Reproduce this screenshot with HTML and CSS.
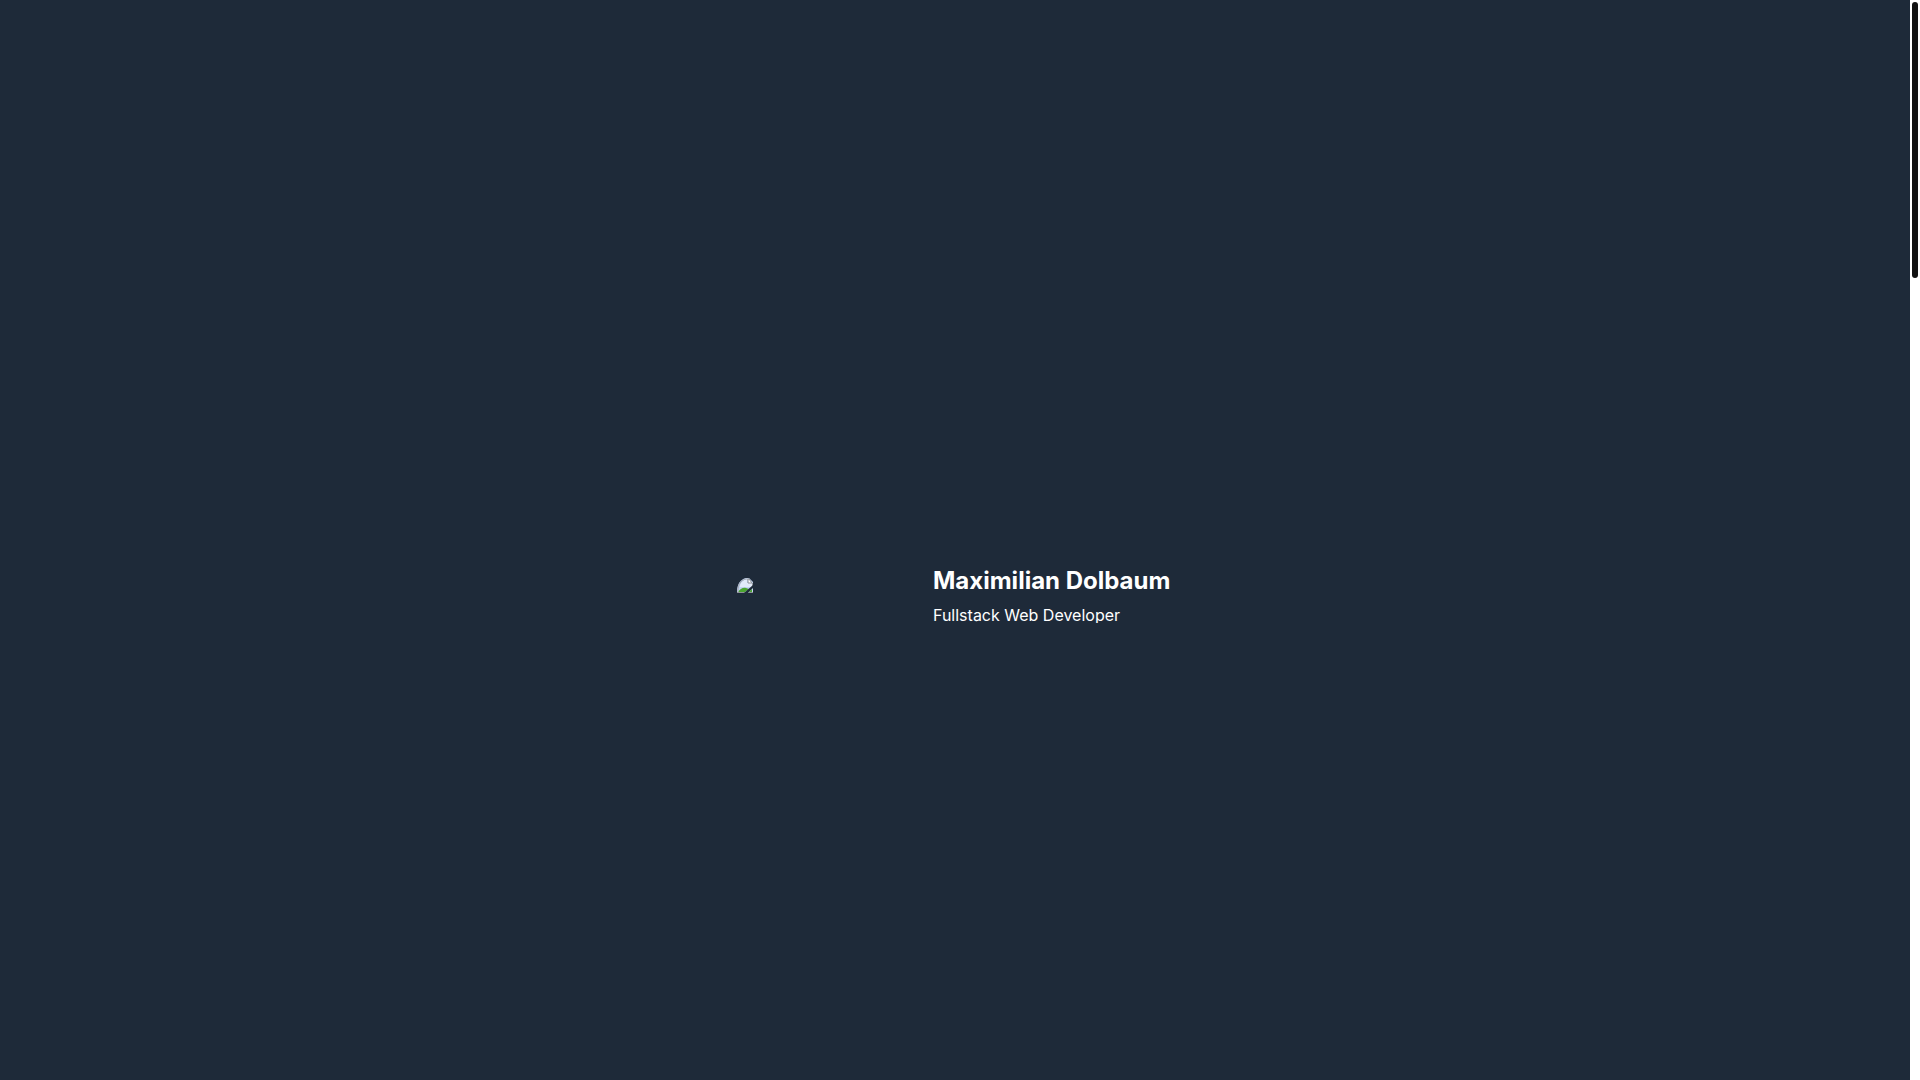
FILE: index.html
```html
<!DOCTYPE html>
<html lang="en">
<head>
    <meta charset="UTF-8">
    <meta name="viewport" content="width=device-width, initial-scale=1.0">
    <title>Maximilian Dolbaum</title>
    <link rel="stylesheet" href="styles.css">
</head>
<body>
    <main class="hero">
        <div class="avatar">
            <svg class="avatar-icon" viewBox="0 0 16 16" aria-hidden="true">
                <path d="M0 15V13C0 6 4 1 9 0H12L16 4V15Z" fill="#c4d5f2"/>
                <path d="M3 9C3 5 6 2 10 1V5H15V9Z" fill="#e2ebfa"/>
                <path d="M1 14C3 11 6 9 9 10L12 11L8 14Z" fill="#4ca631"/>
                <path d="M1 14V12C1 7 4 2 9 1H12" fill="none" stroke="#a5a9b0"/>
                <path d="M11 1V5H15L12 1Z" fill="#fff" stroke="#8d9299"/>
                <path d="M0 14.5H8M15.5 5V8M12 14.5H16" stroke="#8d9299"/>
                <path d="M7 15L16 7V10L11 15Z" fill="#1e2a39"/>
                <path d="M12 14L15 11V14Z" fill="#4ca631"/>
            </svg>
        </div>
        <div class="intro">
            <h1>Maximilian Dolbaum</h1>
            <p>Fullstack Web Developer</p>
        </div>
    </main>
    <div class="scroll-track">
        <div class="scroll-thumb"></div>
    </div>
</body>
</html>
```

FILE: styles.css
```css
body { display: flex; min-height: 100vh; margin: 0; background: #1e2a39; color: #fff; font-family: Inter, sans-serif; }
.hero { flex: 1; display: flex; justify-content: center; align-items: center; padding-top: 108px; }
.avatar { width: 180px; margin-right: 16px; }
.avatar-icon { display: block; width: 16px; height: 16px; margin-bottom: 16px; }
.intro { min-width: 240px; }
h1 { margin: 0; font-size: 24px; line-height: 32px; font-weight: 700; }
p { margin: 10px 0 0; font-size: 16px; line-height: 16px; overflow: hidden; }
.scroll-track { width: 10px; background: #fff; }
.scroll-thumb { height: 276px; margin: 2px; border-radius: 3px; background: #111; }
```
